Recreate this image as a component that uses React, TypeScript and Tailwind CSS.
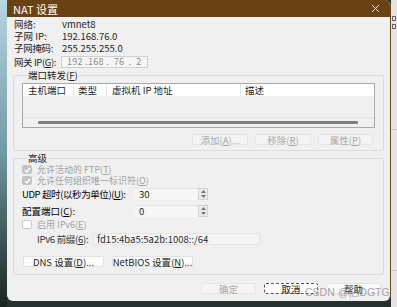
import React from "react";

const font = { fontFamily: '"Noto Sans CJK SC", "Noto Sans", sans-serif' };

function Key({ k }: { k: string }) {
  return (
    <>
      (<u className="underline">{k}</u>)
    </>
  );
}

function Check({ checked, label }: { checked?: boolean; label: React.ReactNode }) {
  return (
    <div className="flex items-center gap-[5px] h-[11px] leading-[10px] text-[#a3a3a3]">
      <div
        className={
          "w-[10px] h-[9px] rounded-[2px] flex items-center justify-center shrink-0 " +
          (checked ? "bg-[#c4c4c4]" : "bg-white border border-[#c8c8c8]")
        }
      >
        {checked && (
          <svg width="7" height="6" viewBox="0 0 7 6">
            <path d="M1 3 L3 5 L6 1" stroke="#fff" strokeWidth="1.3" fill="none" />
          </svg>
        )}
      </div>
      <span className="text-[9px]">{label}</span>
    </div>
  );
}

function Spin({ value }: { value: string }) {
  return (
    <div className="flex h-[12px] w-[73px] shrink-0">
      <div className="flex-1 bg-[#f6f6f6] border-t border-[#e4e4e4] pl-[4px] leading-[11px] text-[#222]">
        {value}
      </div>
      <div className="w-[10px] border border-[#d2d2d2] bg-[#ebebeb] flex flex-col items-center justify-around">
        <svg width="5" height="3" viewBox="0 0 5 3">
          <path d="M0 3 L2.5 0 L5 3 Z" fill="#777" />
        </svg>
        <svg width="5" height="3" viewBox="0 0 5 3">
          <path d="M0 0 L2.5 3 L5 0 Z" fill="#777" />
        </svg>
      </div>
    </div>
  );
}

function Btn({ children, w, disabled, focus }: { children: React.ReactNode; w: string; disabled?: boolean; focus?: boolean }) {
  return (
    <div
      className={
        w +
        " h-[11px] flex items-center justify-center rounded-[2px] shrink-0 " +
        (focus
          ? "bg-white border border-dashed border-[#555] text-[#111]"
          : disabled
          ? "bg-[#f4f4f4] border border-[#e6e6e6] text-[#a8a8a8]"
          : "bg-[#fbfbfb] border border-[#e2e2e2] text-[#222]")
      }
    >
      {children}
    </div>
  );
}

export default function App() {
  return (
    <div
      className="w-[397px] h-[307px] flex bg-[#25302f] overflow-hidden relative text-[9.5px] leading-[12px] whitespace-nowrap"
      style={font}
    >
      <div className="w-[7px] h-[307px] shrink-0 bg-gradient-to-b from-[#b7d5e2] via-[#6f9aa3] to-[#1b2520]" />

      <div className="w-[384px] h-[301px] shrink-0 flex flex-col rounded-tr-[6px] rounded-b-[6px] overflow-hidden border-r border-[#6a4418] bg-[#f0f0f0]">
        <div className="h-[17px] bg-[#694214] flex items-center justify-between pl-[6px] pr-[10px] text-white text-[11px]">
          <span>NAT 设置</span>
          <svg width="9" height="9" viewBox="0 0 9 9">
            <path d="M1 1 L8 8 M8 1 L1 8" stroke="#e8dccb" strokeWidth="1" />
          </svg>
        </div>

        <div className="flex flex-col pl-[7px] text-[#1e1e1e]">
          <div className="flex h-[12px] mt-[1px]">
            <span className="w-[48px]">网络:</span>
            <span>vmnet8</span>
          </div>
          <div className="flex h-[12px]">
            <span className="w-[48px]">子网 IP:</span>
            <span>192.168.76.0</span>
          </div>
          <div className="flex h-[12px]">
            <span className="w-[48px] tracking-[-0.3px]">子网掩码:</span>
            <span>255.255.255.0</span>
          </div>
          <div className="flex items-center h-[13px] mt-[1px]">
            <span className="w-[47px] tracking-[-0.4px]">
              网关 IP<Key k="G" />:
            </span>
            <div className="w-[87px] h-[12px] border border-[#cfcfcf] bg-[#f6f6f6] pl-[5px] text-[#8a8a8a] text-[9px] leading-[10px] tracking-[0.3px] whitespace-pre overflow-hidden">
              {"192 .168 .  76  .  2"}
            </div>
          </div>
        </div>

        <fieldset className="mx-[6px] mt-[1px] border border-[#dcdcdc] rounded-[2px] px-[8px] pb-[5px]">
          <legend className="ml-[5px] px-[1px] h-[12px] text-[#1e1e1e]">
            端口转发<Key k="F" />
          </legend>
          <div className="mt-[2px] h-[45px] border border-[#a8a8a8] bg-[#f0f0f0] flex flex-col">
            <div className="h-[12px] bg-white flex text-[#1e1e1e]">
              <div className="w-[51px] pl-[5px] border-r border-[#e6e6e6]">主机端口</div>
              <div className="w-[33px] pl-[4px] border-r border-[#e6e6e6]">类型</div>
              <div className="w-[134px] pl-[5px] border-r border-[#e6e6e6]">虚拟机 IP 地址</div>
              <div className="flex-1 pl-[4px]">描述</div>
            </div>
            <div className="flex-1" />
            <div className="h-[10px] border-t border-[#e2e2e2] flex items-center pl-[15px] pr-[16px]">
              <div className="h-[3px] w-full bg-[#7d7d7d] rounded-[1px]" />
            </div>
          </div>
          <div className="mt-[6px] flex justify-end gap-[7px] pr-[2px]">
            <Btn w="w-[56px]" disabled>
              添加<Key k="A" />...
            </Btn>
            <Btn w="w-[56px]" disabled>
              移除<Key k="R" />
            </Btn>
            <Btn w="w-[55px]" disabled>
              属性<Key k="P" />
            </Btn>
          </div>
        </fieldset>

        <fieldset className="mx-[6px] mt-[1px] border border-[#dcdcdc] rounded-[2px] pl-[8px] pb-[7px]">
          <legend className="ml-[5px] px-[1px] h-[12px] text-[#1e1e1e]">高级</legend>
          <Check checked label={<>允许活动的 FTP<Key k="T" /></>} />
          <Check checked label={<>允许任何组织唯一标识符<Key k="O" /></>} />
          <div className="flex items-center mt-[2px] h-[12px]">
            <span className="w-[113px] tracking-[-0.4px]">
              UDP 超时(以秒为单位)<Key k="U" />:
            </span>
            <Spin value="30" />
          </div>
          <div className="flex items-center mt-[5px] h-[12px]">
            <span className="w-[113px]">
              配置端口<Key k="C" />:
            </span>
            <Spin value="0" />
          </div>
          <div className="mt-[2px]">
            <Check label={<>启用 IPv6<Key k="E" /></>} />
          </div>
          <div className="flex items-center mt-[3px] h-[12px] pl-[15px]">
            <span className="w-[56px] text-[#333] tracking-[-0.3px]">
              IPv6 前缀<Key k="6" />:
            </span>
            <div className="w-[167px] h-[12px] bg-[#f5f5f5] border border-[#e4e4e4] pl-[3px] leading-[10px] text-[#2a2a2a]">
              fd15:4ba5:5a2b:1008::/64
            </div>
          </div>
          <div className="flex gap-[8px] mt-[11px] pl-[1px]">
            <Btn w="w-[81px]">
              DNS 设置<Key k="D" />...
            </Btn>
            <Btn w="w-[81px]">
              NetBIOS 设置<Key k="N" />...
            </Btn>
          </div>
        </fieldset>

        <div className="flex justify-end gap-[8px] pr-[9px] mt-[8px]">
          <Btn w="w-[55px]" disabled>
            确定
          </Btn>
          <Btn w="w-[54px]" focus>
            取消
          </Btn>
          <Btn w="w-[55px]">帮助</Btn>
        </div>
      </div>

      <div className="flex-1 h-[307px] bg-[#e6e6e6] flex flex-col">
        <div className="h-[16px]" />
        <div className="h-[5px] w-[4px] ml-[1px] border border-[#666]" />
        <div className="h-[3px]" />
        <div className="h-[5px] w-[4px] ml-[1px] border border-[#666]" />
        <div className="h-[100px]" />
        <div className="h-[1px] bg-[#c8c8c8]" />
        <div className="h-[140px]" />
        <div className="h-[1px] bg-[#c8c8c8]" />
      </div>

      <div className="absolute left-[305px] top-[285px] text-[10.5px] leading-[14px] text-[#8c8c8c]/80 font-['Liberation_Sans']">
        CSDN @忆DGTG
      </div>
    </div>
  );
}
